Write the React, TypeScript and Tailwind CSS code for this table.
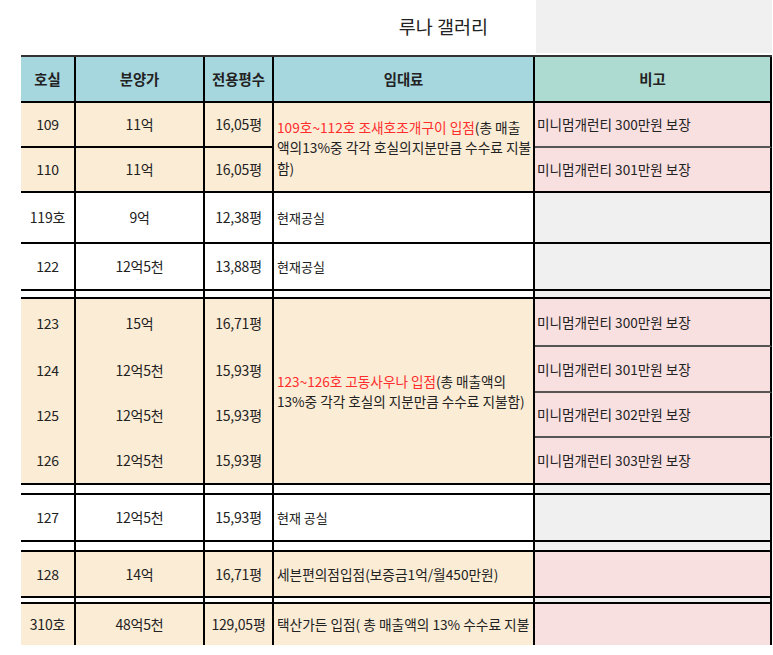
import React from "react";

const F = { fontFamily: '"Noto Sans CJK KR", "Noto Sans", sans-serif' };

const B = "bg-[#fbecd5]";
const W = "bg-white";
const P = "bg-[#f8dfe0]";
const G = "bg-[#f0f0f0]";

function Cell({
  c,
  children,
}: {
  c: string;
  children?: React.ReactNode;
}) {
  return <div className={`flex items-center overflow-hidden whitespace-nowrap border-r-2 border-black ${c}`}>{children}</div>;
}

function Num({ bg, bb, children }: { bg: string; bb: string; children?: React.ReactNode }) {
  return <Cell c={`${bg} ${bb} justify-center text-[14px] tracking-[-0.2px] text-[#222]`}>{children}</Cell>;
}

function Gap() {
  return (
    <>
      <Cell c="bg-white border-b-2" />
      <Cell c="bg-white border-b-2" />
      <Cell c="bg-white border-b-2" />
      <Cell c="bg-white border-b-2" />
      <Cell c="bg-[#f0f0f0] border-b-2" />
    </>
  );
}

function Note({ bg, bb, children }: { bg: string; bb: string; children?: React.ReactNode }) {
  return <Cell c={`${bg} ${bb} pl-[2px] text-[13.6px] text-[#222]`}>{children}</Cell>;
}

const H = "bg-[#a6d6de] border-b-2 justify-center font-bold text-[14.4px] text-[#222]";

export default function App() {
  return (
    <div className="w-[773px] h-[655px] bg-white overflow-hidden" style={F}>
      <div className="flex h-[55px]">
        <div className="flex-1 flex items-center justify-end pr-[48px] pb-[1px]">
          <span className="text-[18.5px] text-[#222]">루나 갤러리</span>
        </div>
        <div className="w-[236px] h-[53px] bg-[#f0f0f0] mr-[1px]" />
      </div>
      <div className="ml-[21px] w-[751px] border-t-2 border-[#333] grid grid-cols-[55px_129px_69px_261px_237px] grid-rows-[46px_45px_45px_51px_47px_8px_48px_46px_45px_47px_10px_47px_10px_46px_6px_41px]">
        {/* header */}
        <Cell c={H}>호실</Cell>
        <Cell c={H}>분양가</Cell>
        <Cell c={H}>전용평수</Cell>
        <Cell c={H}>임대료</Cell>
        <Cell c="bg-[#aedbd1] border-b-2 justify-center font-bold text-[14.4px] text-[#222]">비고</Cell>

        {/* 109 */}
        <Num bg={B} bb="border-b-2">109</Num>
        <Num bg={B} bb="border-b-2">11억</Num>
        <Num bg={B} bb="border-b-2">16,05평</Num>
        <div className={`row-span-2 ${B} border-r-2 border-b-2 border-black flex items-center pl-[3px] pt-[1px] text-[13.7px] leading-[20.5px] text-[#222] overflow-hidden whitespace-nowrap`}>
          <div>
            <span className="text-[#ff2d2d]">109호~112호 조새호조개구이 입점</span>(총 매출
            <br />
            액의13%중 각각 호실의지분만큼 수수료 지불
            <br />
            함)
          </div>
        </div>
        <Note bg={P} bb="border-b-2 border-b-[#555]">미니멈개런티 300만원 보장</Note>

        {/* 110 */}
        <Num bg={B} bb="border-b-2">110</Num>
        <Num bg={B} bb="border-b-2">11억</Num>
        <Num bg={B} bb="border-b-2">16,05평</Num>
        <Note bg={P} bb="border-b-2">미니멈개런티 301만원 보장</Note>

        {/* 119 */}
        <Num bg={W} bb="border-b-2">119호</Num>
        <Num bg={W} bb="border-b-2">9억</Num>
        <Num bg={W} bb="border-b-2">12,38평</Num>
        <Cell c={`${W} border-b-2 pl-[3px] text-[13px] text-[#222]`}>현재공실</Cell>
        <Note bg={G} bb="border-b-2" />

        {/* 122 */}
        <Num bg={W} bb="border-b-2">122</Num>
        <Num bg={W} bb="border-b-2">12억5천</Num>
        <Num bg={W} bb="border-b-2">13,88평</Num>
        <Cell c={`${W} border-b-2 pl-[3px] text-[13px] text-[#222]`}>현재공실</Cell>
        <Note bg={G} bb="border-b-2" />

        <Gap />

        {/* 123 */}
        <Num bg={B} bb="">123</Num>
        <Num bg={B} bb="">15억</Num>
        <Num bg={B} bb="">16,71평</Num>
        <div className={`row-span-4 ${B} border-r-2 border-b-2 border-black flex items-center pl-[3px] text-[13.6px] leading-[20.5px] text-[#222] overflow-hidden whitespace-nowrap`}>
          <div>
            <span className="text-[#ff2d2d]">123~126호 고동사우나 입점</span>(총 매출액의
            <br />
            13%중 각각 호실의 지분만큼 수수료 지불함)
          </div>
        </div>
        <Note bg={P} bb="border-b-2 border-b-[#555]">미니멈개런티 300만원 보장</Note>

        {/* 124 */}
        <Num bg={B} bb="">124</Num>
        <Num bg={B} bb="">12억5천</Num>
        <Num bg={B} bb="">15,93평</Num>
        <Note bg={P} bb="border-b-2 border-b-[#555]">미니멈개런티 301만원 보장</Note>

        {/* 125 */}
        <Num bg={B} bb="">125</Num>
        <Num bg={B} bb="">12억5천</Num>
        <Num bg={B} bb="">15,93평</Num>
        <Note bg={P} bb="border-b-2 border-b-[#555]">미니멈개런티 302만원 보장</Note>

        {/* 126 */}
        <Num bg={B} bb="border-b-2">126</Num>
        <Num bg={B} bb="border-b-2">12억5천</Num>
        <Num bg={B} bb="border-b-2">15,93평</Num>
        <Note bg={P} bb="border-b-2">미니멈개런티 303만원 보장</Note>

        <Gap />

        {/* 127 */}
        <Num bg={W} bb="border-b-2">127</Num>
        <Num bg={W} bb="border-b-2">12억5천</Num>
        <Num bg={W} bb="border-b-2">15,93평</Num>
        <Cell c={`${W} border-b-2 pl-[3px] text-[13px] text-[#222]`}>현재 공실</Cell>
        <Note bg={G} bb="border-b-2" />

        <Gap />

        {/* 128 */}
        <Num bg={B} bb="border-b-2">128</Num>
        <Num bg={B} bb="border-b-2">14억</Num>
        <Num bg={B} bb="border-b-2">16,71평</Num>
        <Cell c={`${B} border-b-2 pl-[3px] text-[13.7px] text-[#222]`}>세븐편의점입점(보증금1억/월450만원)</Cell>
        <Note bg={P} bb="border-b-2" />

        <Gap />

        {/* 310 */}
        <Num bg={B} bb="">310호</Num>
        <Num bg={B} bb="">48억5천</Num>
        <Num bg={B} bb="">129,05평</Num>
        <Cell c={`${B} pl-[3px] text-[13.7px] text-[#222]`}>택산가든 입점( 총 매출액의 13% 수수료 지불</Cell>
        <Note bg={P} bb="" />
      </div>
    </div>
  );
}
